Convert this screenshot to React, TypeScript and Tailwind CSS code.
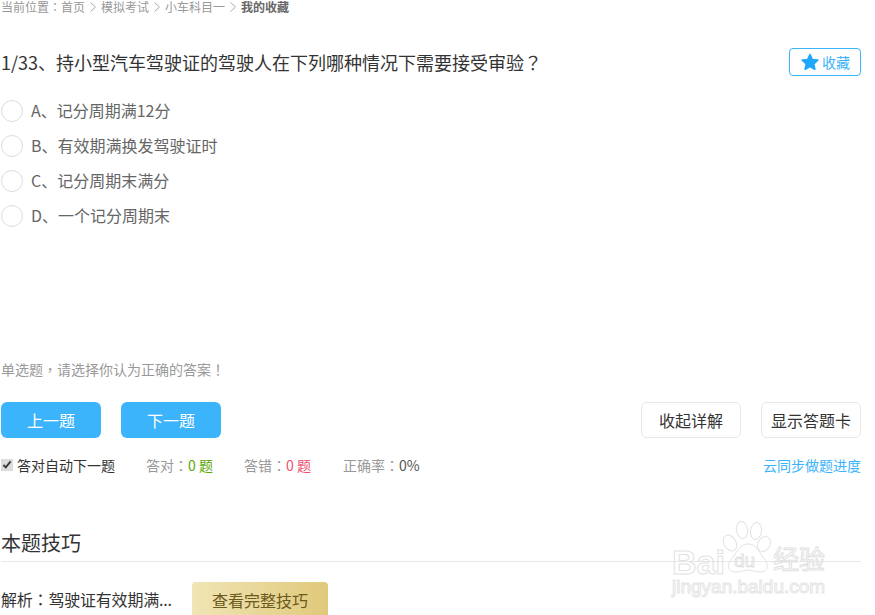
import React from "react";

const options = ["A、记分周期满12分", "B、有效期满换发驾驶证时", "C、记分周期末满分", "D、一个记分周期末"];

// full-width punctuation sits centred in the cell in the original
function Punc({ children }: { children: string }) {
  return <span className="font-['Noto_Sans_CJK_TC',sans-serif]">{children}</span>;
}

function Chevron() {
  return (
    <svg width="8" height="12" viewBox="0 0 8 12" className="mx-[4px]">
      <path d="M1.5 1.5 L6.5 6 L1.5 10.5" fill="none" stroke="#aaaaaa" strokeWidth="1" />
    </svg>
  );
}

function Watermark() {
  return (
    <div className="absolute left-[672px] top-[520px] w-[160px] h-[75px] pointer-events-none">
      <svg width="110" height="60" viewBox="0 0 110 60" className="absolute left-0 top-0" fill="none" stroke="#e2e2e2" strokeWidth="1">
        <ellipse cx="58" cy="23" rx="6" ry="8.5" transform="rotate(-30 58 23)" />
        <ellipse cx="70" cy="10" rx="5.5" ry="8.5" transform="rotate(-8 70 10)" />
        <ellipse cx="84" cy="11" rx="5.5" ry="8.5" transform="rotate(8 84 11)" />
        <ellipse cx="92" cy="24" rx="6" ry="8" transform="rotate(30 92 24)" />
        <path d="M76 24 C68 24 65 32 61 37 C55 43 54 52 64 52 C70 52 72 50 76 50 C80 50 84 52 88 52 C97 52 97 43 91 37 C87 32 84 24 76 24 Z" />
      </svg>
      <div className="absolute left-0 top-[20px] text-[34px] leading-[44px] font-bold text-transparent [-webkit-text-stroke:1px_#e2e2e2] font-['Liberation_Sans',sans-serif]">Bai</div>
      <div className="absolute left-[62px] top-[29px] text-[19px] leading-[24px] text-transparent [-webkit-text-stroke:1px_#e2e2e2] font-['Liberation_Sans',sans-serif]">du</div>
      <div className="absolute left-[101px] top-[20px] text-[26px] leading-[36px] text-transparent [-webkit-text-stroke:1px_#e2e2e2] whitespace-nowrap">经验</div>
      <div className="absolute left-0 top-[56px] text-[19px] leading-[22px] text-transparent [-webkit-text-stroke:1px_#e5e5e5] whitespace-nowrap font-['Liberation_Sans',sans-serif]">jingyan.baidu.com</div>
    </div>
  );
}

export default function App() {
  return (
    <div className="relative h-[615px] w-[875px] overflow-hidden bg-white font-['Noto_Sans_CJK_SC','Liberation_Sans',sans-serif] text-[#333]">
      <div className="w-[861px] pl-[1px]">
        <div className="flex h-[14px] items-center text-[12px] leading-[14px] text-[#999]">
          <span>当前位置<Punc>：</Punc>首页</span>
          <Chevron />
          <span>模拟考试</span>
          <Chevron />
          <span>小车科目一</span>
          <Chevron />
          <span className="font-bold text-[#666]">我的收藏</span>
        </div>

        <div className="mt-[33px] flex h-[30px] items-center justify-between">
          <div className="text-[18px] text-[#333]">1/33、持小型汽车驾驶证的驾驶人在下列哪种情况下需要接受审验<Punc>？</Punc></div>
          <button className="flex h-[28px] w-[72px] items-center justify-center gap-[2px] rounded-[4px] border border-[#3bb4fb] text-[14px] text-[#3bb4fb]">
            <svg width="20" height="20" viewBox="0 0 24 24" fill="#1fa8fb" stroke="#1fa8fb" strokeWidth="2" strokeLinejoin="round">
              <path d="M12 3 L14.8 9 L21.3 9.8 L16.5 14.2 L17.8 20.7 L12 17.5 L6.2 20.7 L7.5 14.2 L2.7 9.8 L9.2 9 Z" />
            </svg>
            收藏
          </button>
        </div>

        <div className="mt-[23px] flex flex-col gap-[13px]">
          {options.map((o) => (
            <div key={o} className="flex h-[22px] items-center gap-[8px] text-[16px] text-[#666]">
              <span className="h-[22px] w-[22px] rounded-full border border-[#ddd]" />
              <span className="pb-[2px]">{o}</span>
            </div>
          ))}
        </div>

        <div className="mt-[133px] flex h-[20px] items-center pb-[2px] text-[14px] text-[#999]">单选题<Punc>，</Punc>请选择你认为正确的答案<Punc>！</Punc></div>

        <div className="mt-[22px] flex h-[36px] items-center justify-between">
          <div className="flex gap-[20px]">
            <button className="h-[36px] w-[100px] rounded-[6px] bg-[#3bb4fb] text-[16px] text-white">上一题</button>
            <button className="h-[36px] w-[100px] rounded-[6px] bg-[#3bb4fb] text-[16px] text-white">下一题</button>
          </div>
          <div className="flex gap-[20px]">
            <button className="h-[36px] w-[100px] rounded-[6px] border border-[#e8e8e8] text-[16px] text-[#333]">收起详解</button>
            <button className="h-[36px] w-[100px] rounded-[6px] border border-[#e8e8e8] text-[16px] text-[#333]">显示答题卡</button>
          </div>
        </div>

        <div className="mt-[17px] flex h-[20px] items-center justify-between text-[14px]">
          <div className="flex items-center">
            <input type="checkbox" defaultChecked readOnly className="m-0 h-[12px] w-[12px] accent-[#ddd]" />
            <span className="ml-[4px] w-[129px] text-[#333]">答对自动下一题</span>
            <span className="w-[98px] text-[#999]">答对<Punc>：</Punc><span className="text-[#5aa700]">0 题</span></span>
            <span className="w-[99px] text-[#999]">答错<Punc>：</Punc><span className="text-[#f04e6e]">0 题</span></span>
            <span className="text-[#999]">正确率<Punc>：</Punc><span className="text-[#555]">0%</span></span>
          </div>
          <a className="text-[#3bb4fb]">云同步做题进度</a>
        </div>

        <div className="mt-[49px] flex h-[38px] items-center border-b border-[#e8e8e8] text-[20px] text-[#333]">本题技巧</div>

        <div className="mt-[20px] flex items-center">
          <span className="w-[191px] pb-[2px] text-[16px] tracking-[-0.2px] text-[#333]">解析<Punc>：</Punc>驾驶证有效期满...</span>
          <button className="h-[36px] w-[136px] rounded-[4px] bg-gradient-to-r from-[#f0e5b5] to-[#e0c97a] text-[16px] text-[#6b5a20]">查看完整技巧</button>
        </div>
      </div>
      <Watermark />
    </div>
  );
}
